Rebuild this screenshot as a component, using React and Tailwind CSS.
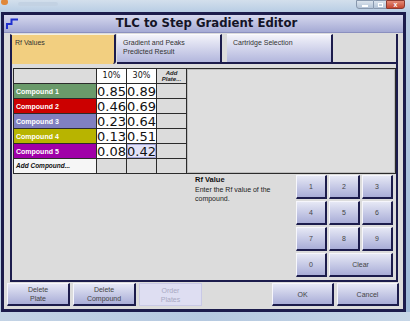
import React from "react";

const NAVY = "border-[#1c1c4c]";

function Btn({ children, className = "" }) {
  return (
    <div
      className={`flex items-center justify-center text-center bg-linear-to-b from-[#e6e8f5] to-[#a9add7] border-t border-l border-r-2 border-b-2 border-t-[#f6f6fc] border-l-[#f6f6fc] border-r-[#1c1c4c] border-b-[#1c1c4c] font-['Liberation_Sans',sans-serif] text-[7px] leading-[9px] text-[#444] ${className}`}
    >
      {children}
    </div>
  );
}

const compounds = [
  ["Compound 1", "bg-[#6a9a6a]", "0.85", "0.89"],
  ["Compound 2", "bg-[#cc0000]", "0.46", "0.69"],
  ["Compound 3", "bg-[#8080c0]", "0.23", "0.64"],
  ["Compound 4", "bg-[#b8b400]", "0.13", "0.51"],
  ["Compound 5", "bg-[#a000a8]", "0.08", "0.42"],
];

export default function App() {
  return (
    <div className="w-[410px] h-[321px] overflow-hidden bg-[#b9cde3] font-['Liberation_Sans',sans-serif]">
      {/* Aero title strip */}
      <div className="h-[12px] flex items-start bg-linear-to-b from-[#d3dfec] to-[#b8cde4]">
        <div className="ml-[1px] mt-[-1px] w-[7px] h-[6px] rounded-full bg-[#e0873a]" />
        <div className="ml-[10px] mt-[2px] w-[40px] h-[4px] bg-[#c3d2e3] rounded-sm" />
        <div className="ml-auto mr-[5px] flex h-[9px]">
          <div className="w-[18px] h-full bg-linear-to-b from-[#dbe4ee] to-[#b3c3d6] border border-[#8797ad] rounded-bl-[3px] flex items-center justify-center">
            <div className="w-[6px] h-[2px] bg-white mt-[2px]" />
          </div>
          <div className="w-[12px] h-full bg-linear-to-b from-[#dbe4ee] to-[#b3c3d6] border-y border-[#8797ad] flex items-center justify-center">
            <div className="w-[5px] h-[4px] border border-white" />
          </div>
          <div className="w-[19px] h-full bg-linear-to-b from-[#e48a76] to-[#c4452e] border border-[#8a3a30] rounded-br-[3px] flex items-center justify-center text-white text-[7px] leading-none font-bold">
            x
          </div>
        </div>
      </div>

      <div className="flex">
        {/* Window */}
        <div className={`ml-[1px] w-[405px] h-[300px] border-[3px] ${NAVY} bg-[#dcdcdc] flex flex-col`}>
          {/* Title bar */}
          <div className="h-[18px] flex items-center bg-linear-to-b from-[#d6d8ee] to-[#a5aad4] border-b border-[#8b90bf]">
            <svg width="12" height="11" viewBox="0 0 12 11" className="ml-[2px] shrink-0">
              <polyline points="1,11 1,6 5.5,6 5.5,1.5 12,1.5" fill="none" stroke="#1f2fd0" strokeWidth="2" />
            </svg>
            <div className="flex-1 text-center pl-[6px] pr-[14px] font-['DejaVu_Sans',sans-serif] font-bold text-[11.7px] leading-none text-[#141426]">
              TLC to Step Gradient Editor
            </div>
          </div>

          {/* Tabs */}
          <div className="h-[31px] flex pt-[1px] pl-[6px] pr-[5px]">
            <div className={`w-[106px] border-l-2 border-r-2 border-t ${NAVY} border-t-[#f4f0e0] bg-[#f2cf80] rounded-br-[3px] pl-[3px] pt-[4px] text-[7px] leading-[8.5px] text-[#333]`}>
              Rf Values
            </div>
            <div className={`ml-[1px] w-[105px] border-r-2 border-b-2 ${NAVY} border-t border-t-[#fafaff] bg-linear-to-b from-[#f3f3fa] to-[#b3b7dd] pl-[6px] pt-[4px] text-[7px] leading-[8.5px] text-[#333]`}>
              Gradient and Peaks
              <br />
              Predicted Result
            </div>
            <div className={`w-[5px] border-b-2 ${NAVY}`} />
            <div className={`w-[106px] border-r-2 border-b-2 ${NAVY} border-t border-t-[#fafaff] bg-linear-to-b from-[#f3f3fa] to-[#b3b7dd] pl-[6px] pt-[4px] text-[7px] leading-[8.5px] text-[#333]`}>
              Cartridge Selection
            </div>
            <div className={`flex-1 border-b-2 border-r-2 ${NAVY}`} />
          </div>

          {/* Panel */}
          <div className={`ml-[6px] w-[388px] h-[218px] border-l-2 border-r-2 border-b-2 ${NAVY} bg-[#dcdcdc] pt-[4px] flex flex-col`}>
            <div className="ml-[1px] w-[383px] grid grid-cols-[82px_29px_29px_29px_1fr] grid-rows-[repeat(7,14px)] gap-px p-px bg-[#2b2b2b]">
              <div className="bg-[#dcdcdc]" />
              <div className="bg-white flex items-center justify-center font-['DejaVu_Sans',sans-serif] text-[8px] leading-none text-[#111]">10%</div>
              <div className="bg-white flex items-center justify-center font-['DejaVu_Sans',sans-serif] text-[8px] leading-none text-[#111]">30%</div>
              <div className="bg-[#dcdcdc] text-center italic font-bold text-[6px] leading-[6px] pt-[1px] text-[#222]">
                Add
                <br />
                Plate...
              </div>
              <div className="col-start-5 row-start-1 row-span-7 bg-[#dedede] border border-[#bdbdbd]" />
              {compounds.map(([name, bg, a, b], i) => (
                <React.Fragment key={name}>
                  <div className={`${bg} flex items-center pl-[2px] text-white font-bold text-[7px] leading-none`}>{name}</div>
                  <div className="bg-white flex items-center justify-center font-['DejaVu_Sans',sans-serif] text-[13px] leading-none text-[#111]">{a}</div>
                  <div className={`${i === 4 ? "bg-[#e2e2f7] outline outline-1 -outline-offset-1 outline-[#a5a8d8]" : "bg-white"} flex items-center justify-center font-['DejaVu_Sans',sans-serif] text-[13px] leading-none text-[#111]`}>{b}</div>
                  <div className="bg-[#dcdcdc]" />
                </React.Fragment>
              ))}
              <div className="bg-[#f6f6f6] flex items-center pl-[2px] italic font-bold text-[6.5px] leading-none text-[#111]">Add Compound...</div>
              <div className="bg-[#dcdcdc]" />
              <div className="bg-[#dcdcdc]" />
              <div className="bg-[#dcdcdc]" />
            </div>

            <div className="flex mt-[1px]">
              <div className="w-[183px] shrink-0" />
              <div className="w-[101px] shrink-0 pt-[0px] text-[7px] leading-[9.5px] text-[#222]">
                <div className="font-bold text-[7.5px] text-[#111]">Rf Value</div>
                <div>Enter the Rf value of the</div>
                <div>compound.</div>
              </div>
              <div className="grid grid-cols-[31px_31px_31px] grid-rows-[repeat(4,24px)] gap-[2px]">
                {["1", "2", "3", "4", "5", "6", "7", "8", "9", "0"].map((k) => (
                  <Btn key={k}>{k}</Btn>
                ))}
                <Btn className="col-span-2">Clear</Btn>
              </div>
            </div>
          </div>

          {/* Bottom buttons */}
          <div className="mt-[1px] h-[23px] flex pl-[3px] pr-[4px]">
            <Btn className="w-[63px]">
              Delete
              <br />
              Plate
            </Btn>
            <Btn className="ml-[3px] w-[63px]">
              Delete
              <br />
              Compound
            </Btn>
            <div className="ml-[3px] w-[63px] flex items-center justify-center text-center bg-[#dedef2] border border-[#c9c9e6] text-[7px] leading-[9px] text-[#a9a9c2]">
              Order
              <br />
              Plates
            </div>
            <div className="flex-1" />
            <Btn className="w-[62px]">OK</Btn>
            <Btn className="ml-[3px] w-[62px]">Cancel</Btn>
          </div>
        </div>
        <div className="flex-1 bg-linear-to-b from-[#b7cbe2] to-[#9fbad8]" />
      </div>

      {/* Aero bottom */}
      <div className="h-[9px] bg-linear-to-r from-[#c3d3e5] via-[#b5c9e0] to-[#c6d6e7]" />
    </div>
  );
}
